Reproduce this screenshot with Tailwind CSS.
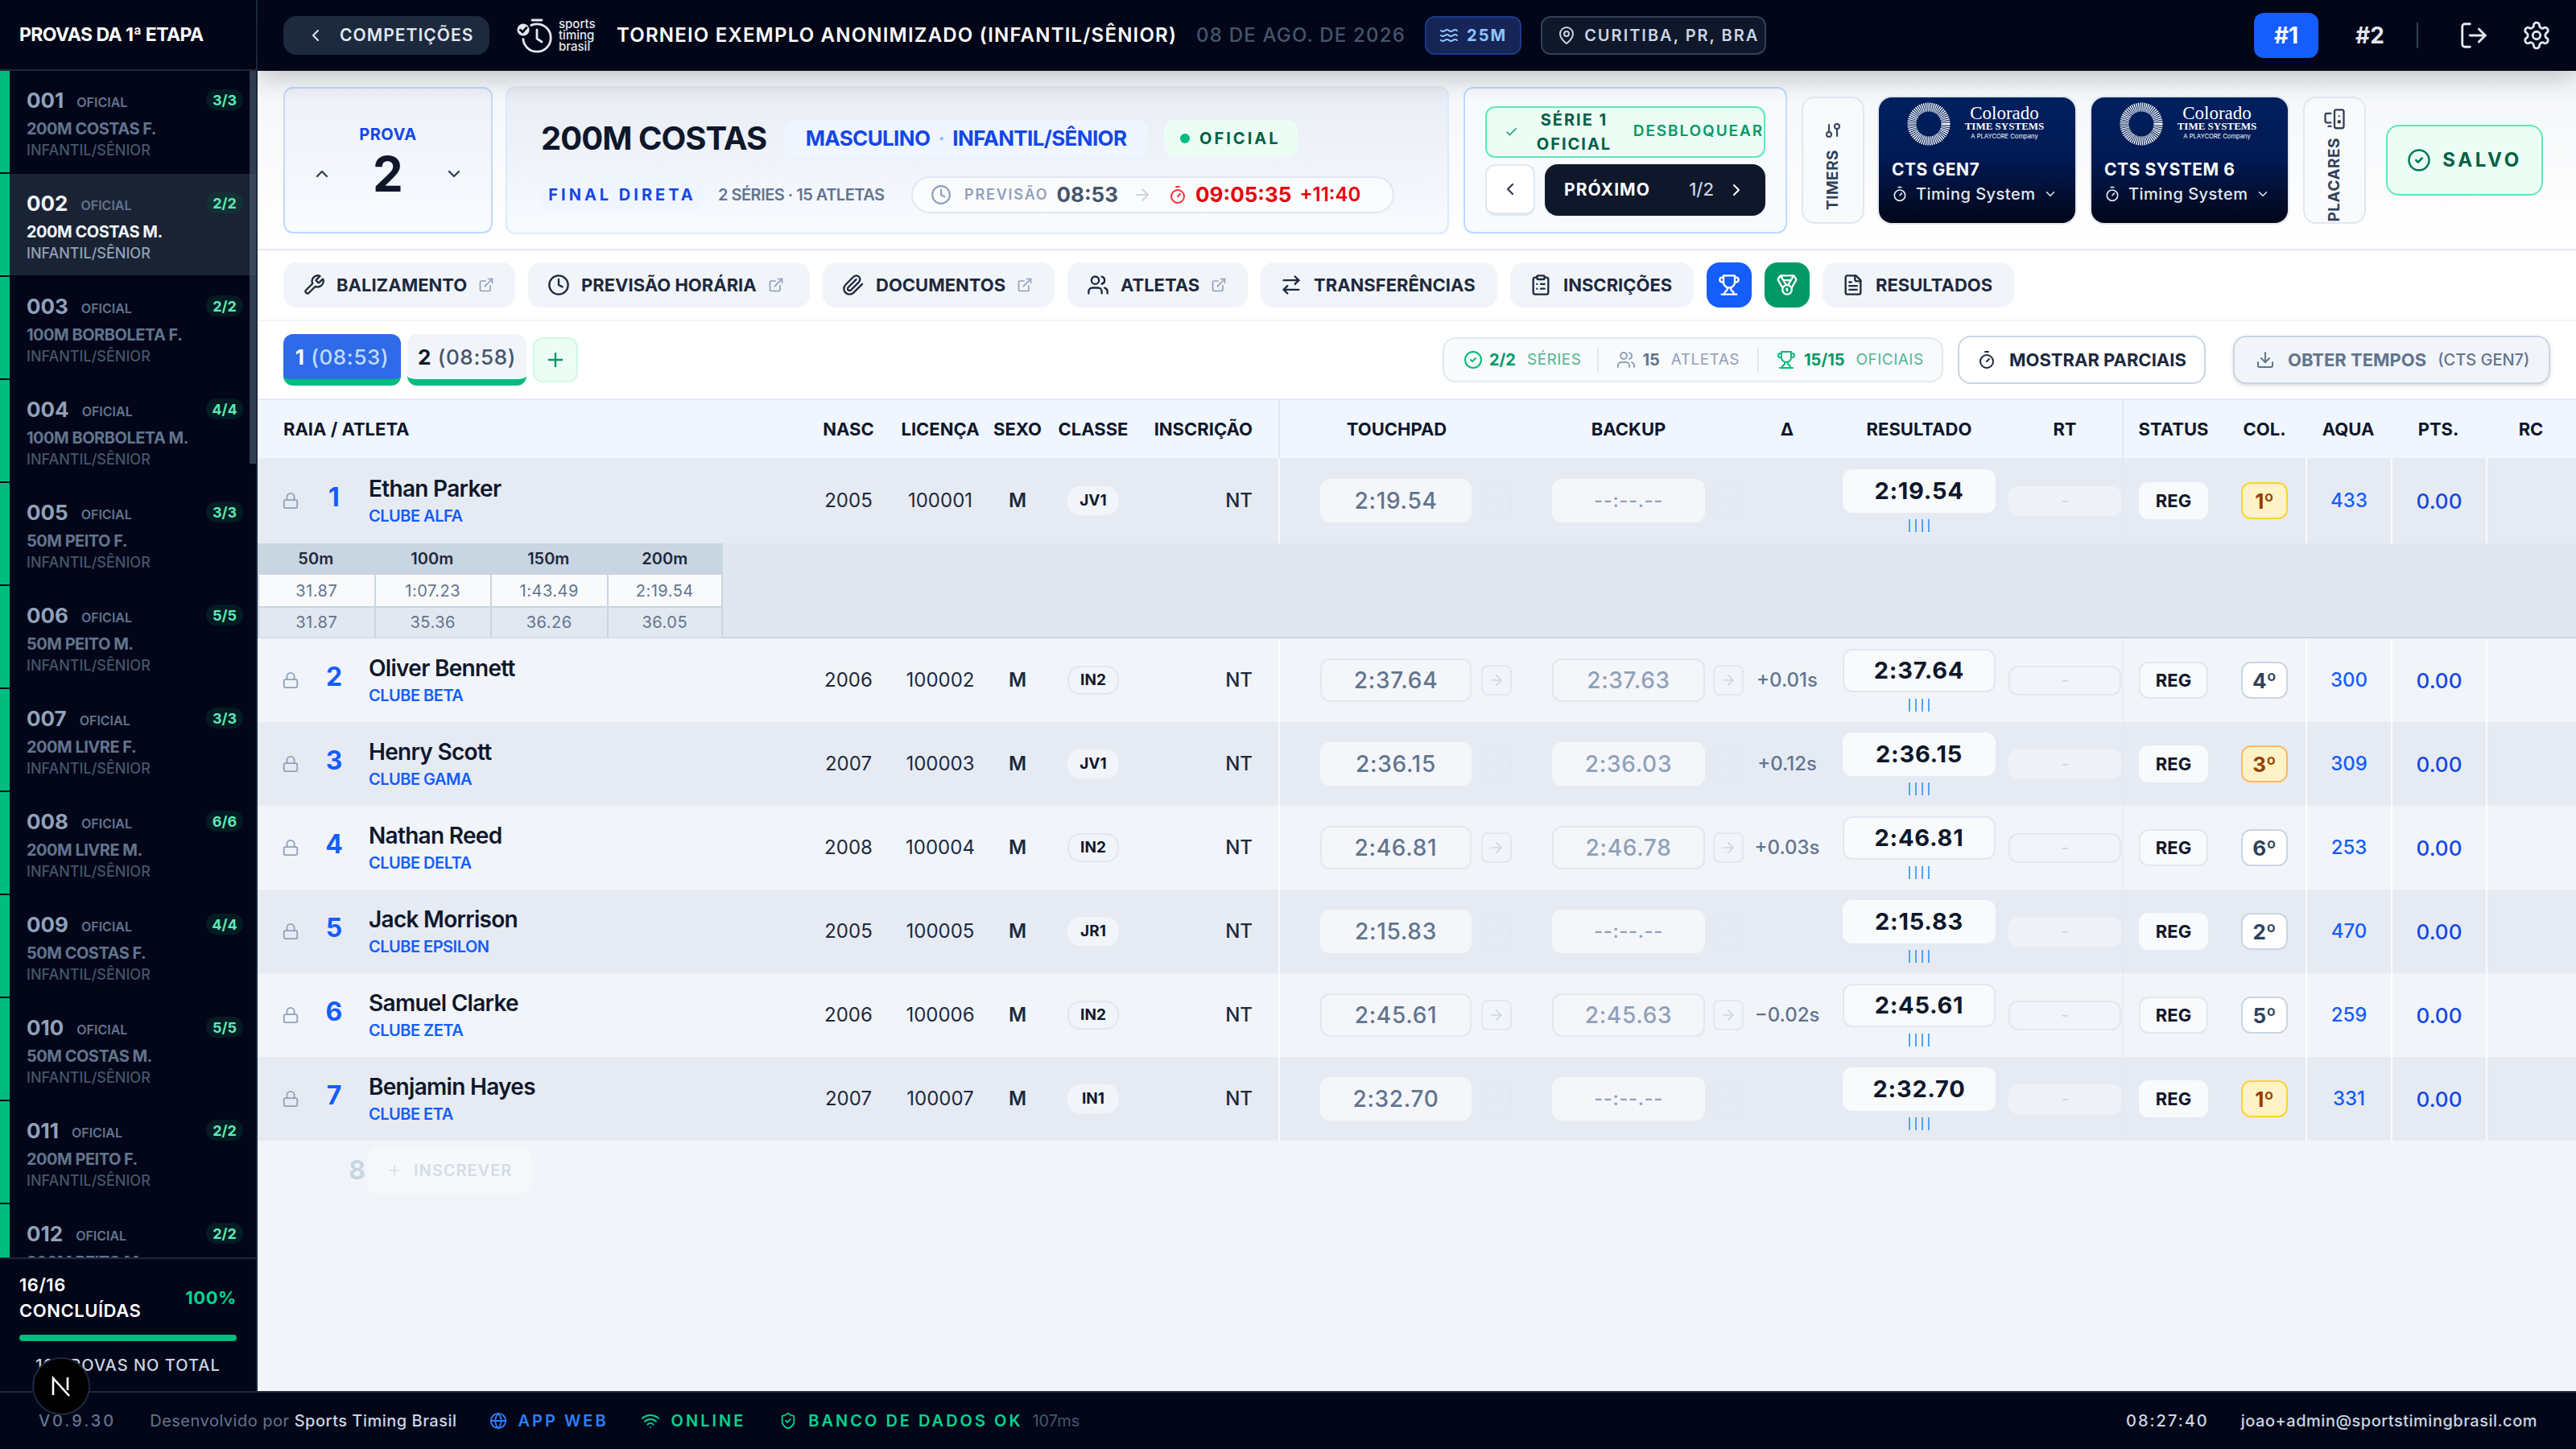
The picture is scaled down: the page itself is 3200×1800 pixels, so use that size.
<!DOCTYPE html>
<html lang="pt-BR">
<head>
    <meta charset="UTF-8">
    <title>Provas da 1ª etapa</title>
    <script src="https://cdn.jsdelivr.net/npm/@tailwindcss/browser@4"></script>
</head>
<body class="bg-slate-950 overflow-hidden">
<div class="[zoom:2] relative w-[1600px] h-[900px] flex flex-col overflow-hidden [font-family:Inter,sans-serif] text-slate-900">
    <div class="flex flex-1 min-h-0">
        <!-- sidebar -->
        <aside class="w-40 shrink-0 flex flex-col bg-slate-950 border-r border-slate-800">
            <div class="h-11 shrink-0 flex items-center pl-3 border-b border-slate-800 text-[11.5px] font-bold text-white tracking-tight whitespace-nowrap">PROVAS DA 1ª ETAPA</div>
            <div class="relative flex-1 min-h-0 overflow-hidden" id="eventList">
                <div class="absolute right-0 top-0 w-1 h-[244px] bg-slate-600/70 z-10"></div>
            </div>
            <div class="h-[83px] shrink-0 border-t border-slate-800 px-3 pt-[8px]">
                <div class="flex items-center justify-between">
                    <div class="text-[11px] leading-4 font-semibold tracking-wide text-white">16/16<br>CONCLUÍDAS</div>
                    <div class="text-[11px] font-bold tracking-wide text-emerald-400">100%</div>
                </div>
                <div class="h-1 mt-[7px] rounded-full bg-emerald-500"></div>
                <div class="mt-[9px] text-center text-[10px] leading-3 font-medium tracking-wider text-slate-300">16 PROVAS NO TOTAL</div>
            </div>
        </aside>

        <div class="flex-1 min-w-0 flex flex-col bg-slate-100">
            <!-- top bar -->
            <header class="relative z-10 h-11 shrink-0 flex items-center px-4 bg-slate-950 shadow-[0_4px_16px_rgba(0,0,0,0.22)]">
                <button class="h-6 w-[128px] flex items-center pl-[14px] gap-[9px] rounded-lg bg-slate-800 text-[10.5px] font-semibold tracking-wider text-slate-200">
                    <svg class="w-3 h-3" viewBox="0 0 24 24" fill="none" stroke="currentColor" stroke-width="2" stroke-linecap="round" stroke-linejoin="round"><path d="m15 18-6-6 6-6"/></svg>
                    COMPETIÇÕES
                </button>
                <svg class="w-[24px] h-[22px] ml-[16px] text-slate-200" viewBox="0 0 24 22" fill="none" stroke="currentColor" stroke-width="1.4" stroke-linecap="round"><circle cx="13.5" cy="12.5" r="8.6"/><path d="M10.5 1.5h6M13.5 7.5v5.5l3 2"/><circle cx="5" cy="7.5" r="4.5" fill="currentColor" stroke="#020618"/><path d="m3.2 7.6 1.4 1.4 2.4-2.8" stroke="#020618"/></svg>
                <div class="ml-[3px] w-[36px] text-[7.5px] leading-[7px] font-medium text-slate-200">sports<br>timing<br>brasil</div>
                <div class="text-[12px] font-semibold tracking-wider text-white whitespace-nowrap">TORNEIO EXEMPLO ANONIMIZADO (INFANTIL/SÊNIOR)</div>
                <div class="ml-3 text-[12px] font-medium tracking-wider text-slate-600 whitespace-nowrap">08 DE AGO. DE 2026</div>
                <div class="ml-3 h-6 w-[60px] flex items-center justify-center gap-[5px] rounded-md border border-blue-900 bg-blue-950 text-[10px] font-bold tracking-widest text-blue-300">
                    <svg class="w-3 h-3" viewBox="0 0 24 24" fill="none" stroke="currentColor" stroke-width="2" stroke-linecap="round"><path d="M2 6c.6.5 1.2 1 2.5 1C7 7 7 5 9.5 5c2.6 0 2.4 2 5 2 2.5 0 2.5-2 5-2 1.3 0 1.9.5 2.5 1"/><path d="M2 12c.6.5 1.2 1 2.5 1 2.5 0 2.5-2 5-2 2.6 0 2.4 2 5 2 2.5 0 2.5-2 5-2 1.3 0 1.9.5 2.5 1"/><path d="M2 18c.6.5 1.2 1 2.5 1 2.5 0 2.5-2 5-2 2.6 0 2.4 2 5 2 2.5 0 2.5-2 5-2 1.3 0 1.9.5 2.5 1"/></svg>
                    25M
                </div>
                <div class="ml-3 h-6 w-[140px] flex items-center pl-[9px] gap-[5px] rounded-md border border-slate-700 bg-slate-900 text-[10px] font-semibold tracking-widest text-slate-300 whitespace-nowrap">
                    <svg class="w-3 h-3 shrink-0" viewBox="0 0 24 24" fill="none" stroke="currentColor" stroke-width="2" stroke-linecap="round" stroke-linejoin="round"><path d="M20 10c0 4.993-5.539 10.193-7.399 11.799a1 1 0 0 1-1.202 0C9.539 20.193 4 14.993 4 10a8 8 0 0 1 16 0"/><circle cx="12" cy="10" r="3"/></svg>
                    CURITIBA, PR, BRA
                </div>
                <button class="ml-auto h-7 w-10 rounded-md bg-blue-600 text-sm font-bold text-white">#1</button>
                <button class="ml-3 h-7 w-10 rounded-md text-sm font-bold text-slate-200">#2</button>
                <div class="ml-[9px] w-px h-4 bg-slate-700"></div>
                <svg class="ml-[25px] w-[19px] h-[19px] text-slate-200" viewBox="0 0 24 24" fill="none" stroke="currentColor" stroke-width="1.8" stroke-linecap="round" stroke-linejoin="round"><path d="M9 21H5a2 2 0 0 1-2-2V5a2 2 0 0 1 2-2h4"/><path d="m16 17 5-5-5-5"/><path d="M21 12H9"/></svg>
                <svg class="ml-[20px] w-[19px] h-[19px] text-slate-200 -mr-[1px]" viewBox="0 0 24 24" fill="none" stroke="currentColor" stroke-width="1.8" stroke-linecap="round" stroke-linejoin="round"><path d="M12.22 2h-.44a2 2 0 0 0-2 2v.18a2 2 0 0 1-1 1.73l-.43.25a2 2 0 0 1-2 0l-.15-.08a2 2 0 0 0-2.73.73l-.22.38a2 2 0 0 0 .73 2.73l.15.1a2 2 0 0 1 1 1.72v.51a2 2 0 0 1-1 1.74l-.15.09a2 2 0 0 0-.73 2.73l.22.38a2 2 0 0 0 2.73.73l.15-.08a2 2 0 0 1 2 0l.43.25a2 2 0 0 1 1 1.73V20a2 2 0 0 0 2 2h.44a2 2 0 0 0 2-2v-.18a2 2 0 0 1 1-1.73l.43-.25a2 2 0 0 1 2 0l.15.08a2 2 0 0 0 2.73-.73l.22-.39a2 2 0 0 0-.73-2.73l-.15-.08a2 2 0 0 1-1-1.74v-.5a2 2 0 0 1 1-1.74l.15-.09a2 2 0 0 0 .73-2.73l-.22-.38a2 2 0 0 0-2.73-.73l-.15.08a2 2 0 0 1-2 0l-.43-.25a2 2 0 0 1-1-1.73V4a2 2 0 0 0-2-2z"/><circle cx="12" cy="12" r="3"/></svg>
            </header>

            <!-- event hero -->
            <section class="h-[111.5px] shrink-0 flex items-center px-4 bg-linear-to-b from-[#f4f6f9] to-white border-b border-slate-200">
                <div class="w-[130px] h-[91px] shrink-0 flex flex-col items-center pt-[21px] rounded-md border border-blue-200 bg-linear-to-b from-[#eef1f7] to-[#f8fbff]">
                    <div class="text-[10px] leading-[15px] font-bold tracking-wide text-blue-700">PROVA</div>
                    <div class="w-full flex items-center justify-between px-[17px] -mt-[1px]">
                        <svg class="w-3 h-3 text-slate-700" viewBox="0 0 24 24" fill="none" stroke="currentColor" stroke-width="2.4" stroke-linecap="round" stroke-linejoin="round"><path d="m18 15-6-6-6 6"/></svg>
                        <div class="text-[30px] leading-9 font-bold text-slate-900">2</div>
                        <svg class="w-3 h-3 text-slate-700" viewBox="0 0 24 24" fill="none" stroke="currentColor" stroke-width="2.4" stroke-linecap="round" stroke-linejoin="round"><path d="m6 9 6 6 6-6"/></svg>
                    </div>
                </div>

                <div class="ml-2 w-[586px] h-[92px] shrink-0 pl-[21px] pt-[20px] rounded-md border border-blue-100 bg-linear-to-b from-[#e8ecf4] to-[#f8fbff]">
                    <div class="flex items-center">
                        <div class="text-[20px] leading-[23px] font-bold tracking-tight text-slate-900 whitespace-nowrap">200M COSTAS</div>
                        <div class="ml-[11px] h-[23px] w-[226px] flex items-center justify-center gap-[5px] rounded-md bg-blue-50 text-[13px] font-bold tracking-tight text-blue-700 whitespace-nowrap">MASCULINO <span class="text-blue-300">·</span> INFANTIL/SÊNIOR</div>
                        <div class="ml-[10px] h-[23px] w-[83px] flex items-center pl-[10px] gap-[6px] rounded-md bg-emerald-50 text-[10px] font-bold tracking-[0.15em] text-emerald-800">
                            <span class="w-[6px] h-[6px] rounded-full bg-emerald-500"></span>OFICIAL
                        </div>
                    </div>
                    <div class="flex items-center mt-[12px]">
                        <div class="h-[19px] w-[101px] flex items-center justify-center rounded-md bg-blue-50 text-[10px] font-bold tracking-[0.2em] text-blue-700 whitespace-nowrap">FINAL DIRETA</div>
                        <div class="ml-[9px] w-[120px] text-[10px] font-semibold tracking-tight text-slate-500 whitespace-nowrap">2 SÉRIES · 15 ATLETAS</div>
                        <div class="h-[23px] w-[300px] flex items-center pl-[11px] rounded-full border border-slate-200 bg-white/60 whitespace-nowrap">
                            <svg class="w-[13px] h-[13px] text-slate-400" viewBox="0 0 24 24" fill="none" stroke="currentColor" stroke-width="2" stroke-linecap="round" stroke-linejoin="round"><circle cx="12" cy="12" r="10"/><path d="M12 6v6l4 2"/></svg>
                            <span class="ml-2 text-[9px] font-semibold tracking-widest text-slate-400">PREVISÃO</span>
                            <span class="ml-[5px] text-[13px] font-bold text-slate-600">08:53</span>
                            <svg class="ml-[9px] w-3 h-3 text-slate-300" viewBox="0 0 24 24" fill="none" stroke="currentColor" stroke-width="2" stroke-linecap="round" stroke-linejoin="round"><path d="M5 12h14"/><path d="m12 5 7 7-7 7"/></svg>
                            <svg class="ml-[10px] w-3 h-3 text-red-500" viewBox="0 0 24 24" fill="none" stroke="currentColor" stroke-width="2" stroke-linecap="round" stroke-linejoin="round"><path d="M10 2h4"/><path d="m12 14 3-3"/><circle cx="12" cy="14" r="8"/></svg>
                            <span class="ml-[5px] text-[13px] font-bold text-red-600">09:05:35</span>
                            <span class="ml-[5px] text-[12px] font-semibold text-red-600">+11:40</span>
                        </div>
                    </div>
                </div>

                <div class="ml-[9px] w-[201px] h-[91px] shrink-0 flex flex-col px-[12.5px] pt-[11px] rounded-md border border-blue-200 bg-[#f8fbfe]">
                    <div class="h-[32px] flex items-center pl-[11px] rounded-md border border-emerald-300 bg-emerald-50">
                        <svg class="w-[9px] h-[9px] text-emerald-600" viewBox="0 0 24 24" fill="none" stroke="currentColor" stroke-width="2" stroke-linecap="round" stroke-linejoin="round"><path d="M20 6 9 17l-5-5"/></svg>
                        <div class="w-[60px] ml-[6px] text-center text-[10px] leading-[15px] font-bold tracking-widest text-emerald-800">SÉRIE 1 OFICIAL</div>
                        <div class="ml-[8px] text-[9.5px] font-semibold tracking-widest text-emerald-600">DESBLOQUEAR</div>
                    </div>
                    <div class="flex gap-[6px] mt-[4px]">
                        <button class="w-[31px] h-8 flex items-center justify-center rounded-md border border-b-2 border-slate-200 bg-white text-slate-700">
                            <svg class="w-3 h-3" viewBox="0 0 24 24" fill="none" stroke="currentColor" stroke-width="2.4" stroke-linecap="round" stroke-linejoin="round"><path d="m15 18-6-6 6-6"/></svg>
                        </button>
                        <button class="flex-1 h-8 flex items-center pl-3 pr-[12px] rounded-lg bg-slate-900 text-white">
                            <span class="text-[10.5px] font-bold tracking-wider">PRÓXIMO</span>
                            <span class="ml-auto text-[11px] font-medium text-slate-300">1/2</span>
                            <svg class="ml-2 w-3 h-3" viewBox="0 0 24 24" fill="none" stroke="currentColor" stroke-width="2" stroke-linecap="round" stroke-linejoin="round"><path d="m9 18 6-6-6-6"/></svg>
                        </button>
                    </div>
                </div>

                <button class="ml-[9px] w-[39px] h-[79px] shrink-0 flex flex-col items-center pt-[14px] gap-[6px] rounded-lg border border-slate-200 bg-slate-50 text-slate-700">
                    <svg class="w-3 h-3 -rotate-90" viewBox="0 0 24 24" fill="none" stroke="currentColor" stroke-width="2" stroke-linecap="round"><path d="M14 17H5"/><path d="M19 7h-9"/><circle cx="17" cy="17" r="3"/><circle cx="7" cy="7" r="3"/></svg>
                    <span class="[writing-mode:vertical-rl] rotate-180 text-[9.5px] leading-3 font-bold tracking-wide">TIMERS</span>
                </button>

                <div class="ml-[9px] w-[122px] h-[78px] shrink-0 flex flex-col items-center pt-[2px] rounded-lg ring-1 ring-slate-200 bg-linear-to-b from-[#00205f] via-[#001a54] to-[#020618] text-white">
                    <div class="flex items-center h-[29px]">
                        <svg class="w-[27px] h-[27px]" viewBox="0 0 27 27" fill="none"><circle cx="13.5" cy="13.5" r="10.5" stroke="#fff" stroke-width="5.5" stroke-dasharray="0.6 0.5"/></svg>
                        <div class="ml-[7px] w-[53px] [font-family:'Liberation_Serif',serif] text-center">
                            <div class="text-[11.5px] leading-[9px]">Colorado</div>
                            <div class="text-[6.5px] leading-[7px] font-bold whitespace-nowrap">TIME SYSTEMS</div>
                            <div class="text-[3.8px] leading-[6px] [font-family:Inter,sans-serif] whitespace-nowrap">A PLAYCORE Company</div>
                        </div>
                    </div>
                    <div class="w-full px-2 mt-[7px] text-[10.5px] leading-[14px] font-bold tracking-wide whitespace-nowrap">CTS GEN7</div>
                    <div class="w-full flex items-center pl-2 pr-[11px] mt-[1px] text-[10px] leading-[14px] font-medium tracking-wide text-slate-200 whitespace-nowrap">
                        <svg class="w-[10px] h-[10px] shrink-0" viewBox="0 0 24 24" fill="none" stroke="currentColor" stroke-width="2" stroke-linecap="round"><path d="M10 2h4"/><path d="m12 14 3-3"/><circle cx="12" cy="14" r="8"/></svg>
                        <span class="ml-[5px]">Timing System</span>
                        <svg class="ml-auto w-[9px] h-[9px]" viewBox="0 0 24 24" fill="none" stroke="currentColor" stroke-width="2" stroke-linecap="round" stroke-linejoin="round"><path d="m6 9 6 6 6-6"/></svg>
                    </div>
                </div>
                <div class="ml-[10px] w-[122px] h-[78px] shrink-0 flex flex-col items-center pt-[2px] rounded-lg ring-1 ring-slate-200 bg-linear-to-b from-[#00205f] via-[#001a54] to-[#020618] text-white">
                    <div class="flex items-center h-[29px]">
                        <svg class="w-[27px] h-[27px]" viewBox="0 0 27 27" fill="none"><circle cx="13.5" cy="13.5" r="10.5" stroke="#fff" stroke-width="5.5" stroke-dasharray="0.6 0.5"/></svg>
                        <div class="ml-[7px] w-[53px] [font-family:'Liberation_Serif',serif] text-center">
                            <div class="text-[11.5px] leading-[9px]">Colorado</div>
                            <div class="text-[6.5px] leading-[7px] font-bold whitespace-nowrap">TIME SYSTEMS</div>
                            <div class="text-[3.8px] leading-[6px] [font-family:Inter,sans-serif] whitespace-nowrap">A PLAYCORE Company</div>
                        </div>
                    </div>
                    <div class="w-full px-2 mt-[7px] text-[10.5px] leading-[14px] font-bold tracking-wide whitespace-nowrap">CTS SYSTEM 6</div>
                    <div class="w-full flex items-center pl-2 pr-[11px] mt-[1px] text-[10px] leading-[14px] font-medium tracking-wide text-slate-200 whitespace-nowrap">
                        <svg class="w-[10px] h-[10px] shrink-0" viewBox="0 0 24 24" fill="none" stroke="currentColor" stroke-width="2" stroke-linecap="round"><path d="M10 2h4"/><path d="m12 14 3-3"/><circle cx="12" cy="14" r="8"/></svg>
                        <span class="ml-[5px]">Timing System</span>
                        <svg class="ml-auto w-[9px] h-[9px]" viewBox="0 0 24 24" fill="none" stroke="currentColor" stroke-width="2" stroke-linecap="round" stroke-linejoin="round"><path d="m6 9 6 6 6-6"/></svg>
                    </div>
                </div>

                <button class="ml-[9.5px] w-[39px] h-[79px] shrink-0 flex flex-col items-center pt-[6px] gap-[5px] rounded-lg border border-slate-200 bg-slate-50 text-slate-700">
                    <svg class="w-[14px] h-[14px]" viewBox="0 0 24 24" fill="none" stroke="currentColor" stroke-width="2" stroke-linecap="round" stroke-linejoin="round"><path d="M5.5 20H8"/><path d="M17 9h.01"/><rect width="10" height="20" x="12" y="2" rx="2"/><path d="M8 6H4a2 2 0 0 0-2 2v6a2 2 0 0 0 2 2h4"/><circle cx="17" cy="15" r="1"/></svg>
                    <span class="[writing-mode:vertical-rl] rotate-180 text-[9.5px] leading-3 font-bold tracking-wide">PLACARES</span>
                </button>

                <div class="ml-[12.5px] w-[97.5px] h-11 shrink-0 flex items-center justify-center gap-[7px] rounded-lg border border-emerald-300 bg-emerald-50 text-[12px] font-bold tracking-[0.15em] text-emerald-800">
                    <svg class="w-[15px] h-[15px] text-emerald-700" viewBox="0 0 24 24" fill="none" stroke="currentColor" stroke-width="2" stroke-linecap="round" stroke-linejoin="round"><circle cx="12" cy="12" r="10"/><path d="m9 12 2 2 4-4"/></svg>
                    SALVO
                </div>
            </section>

            <!-- toolbar -->
            <nav class="h-11 shrink-0 flex items-center gap-2 px-4 bg-white border-b border-slate-100 text-[11px] font-bold text-slate-800 whitespace-nowrap">
                <a class="h-7 w-[144px] flex items-center gap-[7px] pl-3 rounded-lg bg-slate-100">
                    <svg class="w-[14px] h-[14px]" viewBox="0 0 24 24" fill="none" stroke="currentColor" stroke-width="2" stroke-linecap="round" stroke-linejoin="round"><path d="M14.7 6.3a1 1 0 0 0 0 1.4l1.6 1.6a1 1 0 0 0 1.4 0l3.77-3.77a6 6 0 0 1-7.94 7.94l-6.91 6.91a2.12 2.12 0 0 1-3-3l6.91-6.91a6 6 0 0 1 7.94-7.94l-3.76 3.76z"/></svg>
                    BALIZAMENTO
                    <svg class="w-[10px] h-[10px] text-slate-400" viewBox="0 0 24 24" fill="none" stroke="currentColor" stroke-width="2" stroke-linecap="round" stroke-linejoin="round"><path d="M15 3h6v6"/><path d="M10 14 21 3"/><path d="M18 13v6a2 2 0 0 1-2 2H5a2 2 0 0 1-2-2V8a2 2 0 0 1 2-2h6"/></svg>
                </a>
                <a class="h-7 w-[175px] flex items-center gap-[7px] pl-3 rounded-lg bg-slate-100">
                    <svg class="w-[14px] h-[14px]" viewBox="0 0 24 24" fill="none" stroke="currentColor" stroke-width="2" stroke-linecap="round" stroke-linejoin="round"><circle cx="12" cy="12" r="10"/><path d="M12 6v6l4 2"/></svg>
                    PREVISÃO HORÁRIA
                    <svg class="w-[10px] h-[10px] text-slate-400" viewBox="0 0 24 24" fill="none" stroke="currentColor" stroke-width="2" stroke-linecap="round" stroke-linejoin="round"><path d="M15 3h6v6"/><path d="M10 14 21 3"/><path d="M18 13v6a2 2 0 0 1-2 2H5a2 2 0 0 1-2-2V8a2 2 0 0 1 2-2h6"/></svg>
                </a>
                <a class="h-7 w-[144px] flex items-center gap-[7px] pl-3 rounded-lg bg-slate-100">
                    <svg class="w-[14px] h-[14px]" viewBox="0 0 24 24" fill="none" stroke="currentColor" stroke-width="2" stroke-linecap="round" stroke-linejoin="round"><path d="m21.44 11.05-9.19 9.19a6 6 0 0 1-8.49-8.49l8.57-8.57A4 4 0 1 1 18 8.84l-8.59 8.57a2 2 0 0 1-2.83-2.83l8.49-8.48"/></svg>
                    DOCUMENTOS
                    <svg class="w-[10px] h-[10px] text-slate-400" viewBox="0 0 24 24" fill="none" stroke="currentColor" stroke-width="2" stroke-linecap="round" stroke-linejoin="round"><path d="M15 3h6v6"/><path d="M10 14 21 3"/><path d="M18 13v6a2 2 0 0 1-2 2H5a2 2 0 0 1-2-2V8a2 2 0 0 1 2-2h6"/></svg>
                </a>
                <a class="h-7 w-[112px] flex items-center gap-[7px] pl-3 rounded-lg bg-slate-100">
                    <svg class="w-[14px] h-[14px]" viewBox="0 0 24 24" fill="none" stroke="currentColor" stroke-width="2" stroke-linecap="round" stroke-linejoin="round"><path d="M16 21v-2a4 4 0 0 0-4-4H6a4 4 0 0 0-4 4v2"/><circle cx="9" cy="7" r="4"/><path d="M22 21v-2a4 4 0 0 0-3-3.87"/><path d="M16 3.13a4 4 0 0 1 0 7.75"/></svg>
                    ATLETAS
                    <svg class="w-[10px] h-[10px] text-slate-400" viewBox="0 0 24 24" fill="none" stroke="currentColor" stroke-width="2" stroke-linecap="round" stroke-linejoin="round"><path d="M15 3h6v6"/><path d="M10 14 21 3"/><path d="M18 13v6a2 2 0 0 1-2 2H5a2 2 0 0 1-2-2V8a2 2 0 0 1 2-2h6"/></svg>
                </a>
                <a class="h-7 w-[147px] flex items-center gap-[7px] pl-3 rounded-lg bg-slate-100">
                    <svg class="w-[14px] h-[14px]" viewBox="0 0 24 24" fill="none" stroke="currentColor" stroke-width="2" stroke-linecap="round" stroke-linejoin="round"><path d="m16 3 4 4-4 4"/><path d="M20 7H4"/><path d="m8 21-4-4 4-4"/><path d="M4 17h16"/></svg>
                    TRANSFERÊNCIAS
                </a>
                <a class="h-7 w-[114px] flex items-center gap-[7px] pl-3 rounded-lg bg-slate-100">
                    <svg class="w-[14px] h-[14px]" viewBox="0 0 24 24" fill="none" stroke="currentColor" stroke-width="2" stroke-linecap="round" stroke-linejoin="round"><rect width="8" height="4" x="8" y="2" rx="1"/><path d="M16 4h2a2 2 0 0 1 2 2v14a2 2 0 0 1-2 2H6a2 2 0 0 1-2-2V6a2 2 0 0 1 2-2h2"/><path d="M12 11h4"/><path d="M12 16h4"/><path d="M8 11h.01"/><path d="M8 16h.01"/></svg>
                    INSCRIÇÕES
                </a>
                <a class="h-7 w-7 flex items-center justify-center rounded-lg bg-blue-600 text-white">
                    <svg class="w-[14px] h-[14px]" viewBox="0 0 24 24" fill="none" stroke="currentColor" stroke-width="2" stroke-linecap="round" stroke-linejoin="round"><path d="M6 9H4.5a2.5 2.5 0 0 1 0-5H6"/><path d="M18 9h1.5a2.5 2.5 0 0 0 0-5H18"/><path d="M4 22h16"/><path d="M10 14.66V17c0 .55-.47.98-.97 1.21C7.85 18.75 7 20.24 7 22"/><path d="M14 14.66V17c0 .55.47.98.97 1.21C16.15 18.75 17 20.24 17 22"/><path d="M18 2H6v7a6 6 0 0 0 12 0V2Z"/></svg>
                </a>
                <a class="h-7 w-7 flex items-center justify-center rounded-lg bg-emerald-600 text-white">
                    <svg class="w-[14px] h-[14px]" viewBox="0 0 24 24" fill="none" stroke="currentColor" stroke-width="2" stroke-linecap="round" stroke-linejoin="round"><path d="M7.21 15 2.66 7.14a2 2 0 0 1 .13-2.2L4.4 2.8A2 2 0 0 1 6 2h12a2 2 0 0 1 1.6.8l1.6 2.14a2 2 0 0 1 .14 2.2L16.79 15"/><path d="M11 12 5.12 2.2"/><path d="m13 12 5.88-9.8"/><path d="M8 7h8"/><circle cx="12" cy="17" r="5"/><path d="M12 18v-2h-.5"/></svg>
                </a>
                <a class="h-7 w-[119px] flex items-center gap-[7px] pl-3 rounded-lg bg-slate-100">
                    <svg class="w-[14px] h-[14px]" viewBox="0 0 24 24" fill="none" stroke="currentColor" stroke-width="2" stroke-linecap="round" stroke-linejoin="round"><path d="M15 2H6a2 2 0 0 0-2 2v16a2 2 0 0 0 2 2h12a2 2 0 0 0 2-2V7Z"/><path d="M14 2v4a2 2 0 0 0 2 2h4"/><path d="M10 9H8"/><path d="M16 13H8"/><path d="M16 17H8"/></svg>
                    RESULTADOS
                </a>
            </nav>

            <!-- heats row -->
            <div class="h-12 shrink-0 flex items-center px-4 bg-white whitespace-nowrap">
                <button class="w-[73px] h-8 rounded-md border-b-4 border-emerald-500 bg-[#2f6ae8] text-[13px] font-medium tracking-wide text-blue-200"><b class="font-bold text-white">1</b> (08:53)</button>
                <button class="ml-1 w-[74px] h-8 rounded-md border-b-4 border-emerald-500 bg-slate-100 text-[13px] font-medium tracking-wide text-slate-600"><b class="font-bold text-slate-900">2</b> (08:58)</button>
                <button class="ml-1 w-7 h-7 flex items-center justify-center rounded-md border border-emerald-100 bg-emerald-50 text-emerald-600">
                    <svg class="w-[14px] h-[14px]" viewBox="0 0 24 24" fill="none" stroke="currentColor" stroke-width="2" stroke-linecap="round"><path d="M5 12h14"/><path d="M12 5v14"/></svg>
                </button>
                <div class="ml-auto w-[311px] h-7 flex items-center pl-[12px] rounded-lg border border-slate-200 bg-slate-50 text-[10px]">
                    <svg class="w-3 h-3 text-emerald-500" viewBox="0 0 24 24" fill="none" stroke="currentColor" stroke-width="2" stroke-linecap="round" stroke-linejoin="round"><circle cx="12" cy="12" r="10"/><path d="m9 12 2 2 4-4"/></svg>
                    <span class="ml-1 font-bold text-emerald-600">2/2</span>
                    <span class="ml-[7px] text-[9.5px] tracking-wide text-emerald-600/70">SÉRIES</span>
                    <span class="ml-[10px] w-px h-4 bg-slate-200"></span>
                    <svg class="ml-[11px] w-3 h-3 text-slate-400" viewBox="0 0 24 24" fill="none" stroke="currentColor" stroke-width="2" stroke-linecap="round" stroke-linejoin="round"><path d="M16 21v-2a4 4 0 0 0-4-4H6a4 4 0 0 0-4 4v2"/><circle cx="9" cy="7" r="4"/><path d="M22 21v-2a4 4 0 0 0-3-3.87"/><path d="M16 3.13a4 4 0 0 1 0 7.75"/></svg>
                    <span class="ml-1 font-bold text-slate-500">15</span>
                    <span class="ml-[7px] text-[9.5px] tracking-wide text-slate-400">ATLETAS</span>
                    <span class="ml-[11px] w-px h-4 bg-slate-200"></span>
                    <svg class="ml-[11px] w-3 h-3 text-emerald-500" viewBox="0 0 24 24" fill="none" stroke="currentColor" stroke-width="2" stroke-linecap="round" stroke-linejoin="round"><path d="M6 9H4.5a2.5 2.5 0 0 1 0-5H6"/><path d="M18 9h1.5a2.5 2.5 0 0 0 0-5H18"/><path d="M4 22h16"/><path d="M10 14.66V17c0 .55-.47.98-.97 1.21C7.85 18.75 7 20.24 7 22"/><path d="M14 14.66V17c0 .55.47.98.97 1.21C16.15 18.75 17 20.24 17 22"/><path d="M18 2H6v7a6 6 0 0 0 12 0V2Z"/></svg>
                    <span class="ml-[5px] font-bold text-emerald-600">15/15</span>
                    <span class="ml-[7px] text-[9.5px] tracking-wide text-emerald-600/70">OFICIAIS</span>
                </div>
                <button class="ml-[9px] w-[154px] h-[30px] flex items-center pl-[11px] gap-[8px] rounded-lg border border-slate-300 bg-white text-[11px] font-bold text-slate-800">
                    <svg class="w-3 h-3" viewBox="0 0 24 24" fill="none" stroke="currentColor" stroke-width="2" stroke-linecap="round"><path d="M10 2h4"/><path d="m12 14 3-3"/><circle cx="12" cy="14" r="8"/></svg>
                    MOSTRAR PARCIAIS
                </button>
                <button class="ml-[17px] w-[197px] h-[30px] flex items-center pl-[13px] rounded-lg border border-slate-300 bg-slate-100 shadow-sm text-[11px] font-bold text-slate-500">
                    <svg class="w-3 h-3" viewBox="0 0 24 24" fill="none" stroke="currentColor" stroke-width="2" stroke-linecap="round" stroke-linejoin="round"><path d="M21 15v4a2 2 0 0 1-2 2H5a2 2 0 0 1-2-2v-4"/><path d="m7 10 5 5 5-5"/><path d="M12 15V3"/></svg>
                    <span class="ml-[8px]">OBTER TEMPOS</span>
                    <span class="ml-[7px] text-[10px] font-medium">(CTS GEN7)</span>
                </button>
            </div>

            <!-- table -->
            <div class="flex-1 min-h-0">
                <div class="h-[37px] grid grid-cols-[343px_48px_66px_30px_64px_84px_145px_143px_54px_110px_72px_62px_51px_53px_59px_56px] items-stretch border-t border-slate-200 bg-blue-50 text-[11px] font-bold text-slate-900 whitespace-nowrap">
                    <div class="flex items-center pl-4">RAIA / ATLETA</div>
                    <div class="flex items-center justify-center">NASC</div>
                    <div class="flex items-center justify-center">LICENÇA</div>
                    <div class="flex items-center justify-center">SEXO</div>
                    <div class="flex items-center justify-center">CLASSE</div>
                    <div class="flex items-center justify-end pr-4 border-r border-slate-200">INSCRIÇÃO</div>
                    <div class="flex items-center justify-center">TOUCHPAD</div>
                    <div class="flex items-center justify-center">BACKUP</div>
                    <div class="flex items-center justify-center">Δ</div>
                    <div class="flex items-center justify-center">RESULTADO</div>
                    <div class="flex items-center justify-center border-r border-slate-200">RT</div>
                    <div class="flex items-center justify-center">STATUS</div>
                    <div class="flex items-center justify-center">COL.</div>
                    <div class="flex items-center justify-center">AQUA</div>
                    <div class="flex items-center justify-center">PTS.</div>
                    <div class="flex items-center justify-center">RC</div>
                </div>
                <div id="rows"></div>
                <div class="h-[37px] flex items-center">
                    <div class="w-[68px] pr-[1px] text-right text-[16px] font-bold text-slate-300">8</div>
                    <div class="ml-[0px] w-[102px] h-7 flex items-center pl-[12px] gap-[7px] rounded-md bg-white/40 text-[10px] font-semibold tracking-wider text-slate-300/80">
                        <svg class="w-[10px] h-[10px]" viewBox="0 0 24 24" fill="none" stroke="currentColor" stroke-width="2" stroke-linecap="round"><path d="M5 12h14"/><path d="M12 5v14"/></svg>
                        INSCREVER
                    </div>
                </div>
            </div>
        </div>
    </div>

    <!-- footer -->
    <footer class="h-9 shrink-0 flex items-center pl-6 pr-6 border-t border-slate-800 bg-slate-950 text-[10px] whitespace-nowrap">
        <span class="font-medium tracking-[0.15em] text-slate-500">V0.9.30</span>
        <span class="ml-[21px] tracking-wide text-slate-500">Desenvolvido por <span class="font-medium text-slate-300">Sports Timing Brasil</span></span>
        <svg class="ml-[20px] w-[11px] h-[11px] text-blue-500" viewBox="0 0 24 24" fill="none" stroke="currentColor" stroke-width="2" stroke-linecap="round" stroke-linejoin="round"><circle cx="12" cy="12" r="10"/><path d="M12 2a14.5 14.5 0 0 0 0 20 14.5 14.5 0 0 0 0-20"/><path d="M2 12h20"/></svg>
        <span class="ml-[7px] font-semibold tracking-[0.15em] text-blue-500">APP WEB</span>
        <svg class="ml-[20px] w-[12px] h-[12px] text-emerald-400" viewBox="0 0 24 24" fill="none" stroke="currentColor" stroke-width="2" stroke-linecap="round" stroke-linejoin="round"><path d="M12 20h.01"/><path d="M2 8.82a15 15 0 0 1 20 0"/><path d="M5 12.859a10 10 0 0 1 14 0"/><path d="M8.5 16.429a5 5 0 0 1 7 0"/></svg>
        <span class="ml-[7px] font-semibold tracking-[0.15em] text-emerald-400">ONLINE</span>
        <svg class="ml-[21px] w-[11px] h-[11px] text-emerald-400" viewBox="0 0 24 24" fill="none" stroke="currentColor" stroke-width="2" stroke-linecap="round" stroke-linejoin="round"><path d="M20 13c0 5-3.5 7.5-7.66 8.95a1 1 0 0 1-.67-.01C7.5 20.5 4 18 4 13V6a1 1 0 0 1 1-1c2 0 4.5-1.2 6.24-2.72a1.17 1.17 0 0 1 1.52 0C14.51 3.81 17 5 19 5a1 1 0 0 1 1 1z"/><path d="m9 12 2 2 4-4"/></svg>
        <span class="ml-[7px] font-semibold tracking-[0.15em] text-emerald-400">BANCO DE DADOS OK</span>
        <span class="ml-[6px] text-slate-600">107ms</span>
        <span class="ml-auto font-medium tracking-widest text-slate-300">08:27:40</span>
        <span class="ml-5 font-medium tracking-wide text-slate-300">joao+admin@sportstimingbrasil.com</span>
    </footer>

    <!-- next.js dev badge -->
    <div class="absolute left-5 top-[843px] w-9 h-9 flex items-center justify-center rounded-full bg-black border border-slate-800 z-20">
        <svg class="w-[15px] h-[15px]" viewBox="0 0 15 15" fill="none" stroke="#fff" stroke-width="1.3"><path d="M2.5 13V2.5L12.5 13.5"/><path d="M11.5 2v8"/></svg>
    </div>
</div>

<script>
    // Sidebar events
    const events = [
        ['001', '200M COSTAS F.', '3/3'], ['002', '200M COSTAS M.', '2/2'], ['003', '100M BORBOLETA F.', '2/2'],
        ['004', '100M BORBOLETA M.', '4/4'], ['005', '50M PEITO F.', '3/3'], ['006', '50M PEITO M.', '5/5'],
        ['007', '200M LIVRE F.', '3/3'], ['008', '200M LIVRE M.', '6/6'], ['009', '50M COSTAS F.', '4/4'],
        ['010', '50M COSTAS M.', '5/5'], ['011', '200M PEITO F.', '2/2'], ['012', '200M PEITO M.', '2/2'],
    ];
    const eventList = document.getElementById('eventList');
    events.forEach(([num, title, count]) => {
        const active = num === '002';
        const item = document.createElement('div');
        item.className = 'h-[63px] mb-px pl-[10.5px] pr-2 pt-[11px] border-l-[6px] border-emerald-500 whitespace-nowrap ' + (active ? 'bg-[#1a2333]' : 'bg-slate-950');
        item.innerHTML = `
            <div class="flex items-center h-[14px]">
                <span class="text-[13px] font-bold ${active ? 'text-slate-100' : 'text-slate-400'}">${num}</span>
                <span class="ml-2 mt-[3px] text-[8px] font-semibold text-slate-500">OFICIAL</span>
                <span class="ml-auto w-[23px] h-[13px] flex items-center justify-center rounded-full bg-emerald-900/30 text-[9px] font-bold text-emerald-300">${count}</span>
            </div>
            <div class="mt-[5px] text-[10px] leading-3 font-bold tracking-tight ${active ? 'text-slate-100' : 'text-slate-500'}">${title}</div>
            <div class="mt-[1.5px] text-[9px] leading-3 font-medium ${active ? 'text-slate-400' : 'text-slate-600'}">INFANTIL/SÊNIOR</div>`;
        eventList.appendChild(item);
    });

    // Table rows
    const athletes = [
        { lane: 1, name: 'Ethan Parker', club: 'CLUBE ALFA', year: 2005, lic: '100001', cls: 'JV1', touch: '2:19.54', backup: '--:--.--', delta: '', res: '2:19.54', pos: '1º', medal: 'gold', aqua: 433 },
        { lane: 2, name: 'Oliver Bennett', club: 'CLUBE BETA', year: 2006, lic: '100002', cls: 'IN2', touch: '2:37.64', backup: '2:37.63', delta: '+0.01s', res: '2:37.64', pos: '4º', aqua: 300 },
        { lane: 3, name: 'Henry Scott', club: 'CLUBE GAMA', year: 2007, lic: '100003', cls: 'JV1', touch: '2:36.15', backup: '2:36.03', delta: '+0.12s', res: '2:36.15', pos: '3º', medal: 'bronze', aqua: 309 },
        { lane: 4, name: 'Nathan Reed', club: 'CLUBE DELTA', year: 2008, lic: '100004', cls: 'IN2', touch: '2:46.81', backup: '2:46.78', delta: '+0.03s', res: '2:46.81', pos: '6º', aqua: 253 },
        { lane: 5, name: 'Jack Morrison', club: 'CLUBE EPSILON', year: 2005, lic: '100005', cls: 'JR1', touch: '2:15.83', backup: '--:--.--', delta: '', res: '2:15.83', pos: '2º', aqua: 470 },
        { lane: 6, name: 'Samuel Clarke', club: 'CLUBE ZETA', year: 2006, lic: '100006', cls: 'IN2', touch: '2:45.61', backup: '2:45.63', delta: '−0.02s', res: '2:45.61', pos: '5º', aqua: 259 },
        { lane: 7, name: 'Benjamin Hayes', club: 'CLUBE ETA', year: 2007, lic: '100007', cls: 'IN1', touch: '2:32.70', backup: '--:--.--', delta: '', res: '2:32.70', pos: '1º', medal: 'gold', aqua: 331 },
    ];
    const arrow = '<svg class="w-[10px] h-[10px]" viewBox="0 0 24 24" fill="none" stroke="currentColor" stroke-width="2" stroke-linecap="round" stroke-linejoin="round"><path d="M5 12h14"/><path d="m12 5 7 7-7 7"/></svg>';
    const lock = '<svg class="w-[11px] h-[11px] text-slate-400" viewBox="0 0 24 24" fill="none" stroke="currentColor" stroke-width="2" stroke-linecap="round" stroke-linejoin="round"><rect width="18" height="11" x="3" y="11" rx="2"/><path d="M7 11V7a5 5 0 0 1 10 0v4"/></svg>';

    const rowsEl = document.getElementById('rows');
    athletes.forEach((a, i) => {
        const odd = i % 2 === 0;
        const border = odd ? 'border-transparent' : 'border-slate-200';
        const noBackup = a.backup.startsWith('-');
        const medalClass = a.medal === 'gold' ? 'border-amber-300 bg-amber-100 text-amber-800'
            : a.medal === 'bronze' ? 'border-orange-300 bg-amber-100 text-amber-800'
            : 'border-slate-300 bg-white text-slate-700';
        const row = document.createElement('div');
        row.className = 'grid grid-cols-[343px_48px_66px_30px_64px_84px_145px_143px_54px_110px_72px_62px_51px_53px_59px_56px] items-stretch whitespace-nowrap ' +
            (i === 0 ? 'h-[53px] ' : 'h-[52px] ') + (odd ? 'bg-[#e6ebf3]' : 'bg-[#f1f5f9]');
        row.innerHTML = `
            <div class="flex items-center pl-[15px]">
                ${lock}
                <div class="w-[43px] -mt-1 text-center text-[16px] font-bold text-blue-600">${a.lane}</div>
                <div class="leading-none">
                    <div class="text-[14px] leading-[18px] font-semibold tracking-tight text-slate-900">${a.name}</div>
                    <div class="text-[10px] leading-[14px] mt-[1px] font-semibold tracking-tight text-blue-600">${a.club}</div>
                </div>
            </div>
            <div class="flex items-center justify-center text-[12px] text-slate-800">${a.year}</div>
            <div class="flex items-center justify-center text-[12px] text-slate-800">${a.lic}</div>
            <div class="flex items-center justify-center text-[12px] font-semibold text-slate-800">M</div>
            <div class="flex items-center justify-center"><span class="w-[32px] h-[18px] flex items-center justify-center rounded-lg border ${odd ? 'border-transparent bg-slate-100' : 'border-slate-200 bg-slate-100'} text-[9.5px] font-bold text-slate-900">${a.cls}</span></div>
            <div class="flex items-center justify-end pr-4 border-r border-white/70 text-[12px] font-medium text-slate-800">NT</div>
            <div class="flex items-center pl-[25px] gap-[6px]">
                <span class="w-[94px] h-[27px] flex items-center justify-center rounded-md border ${border} bg-[#f4f6fa] text-[14px] font-medium tracking-wide text-slate-500">${a.touch}</span>
                <span class="w-[19px] h-[19px] flex items-center justify-center rounded border ${odd ? 'border-slate-200/60 text-slate-200' : 'border-slate-200 text-slate-300'}">${arrow}</span>
            </div>
            <div class="flex items-center pl-[24px] gap-[5px]">
                <span class="w-[95px] h-[27px] flex items-center justify-center rounded-md border ${border} bg-[#f4f6fa] ${noBackup ? 'text-[12px] text-slate-400' : 'text-[14px] text-slate-400'} font-medium tracking-wide">${a.backup}</span>
                <span class="w-[19px] h-[19px] flex items-center justify-center rounded border ${noBackup || odd ? 'border-slate-200/60 text-slate-200' : 'border-slate-200 text-slate-300'}">${arrow}</span>
            </div>
            <div class="flex items-center justify-center text-[12px] font-medium text-slate-500">${a.delta}</div>
            <div class="flex flex-col items-center justify-center gap-[4px]">
                <span class="w-[95px] h-[27px] flex items-center justify-center rounded-md border ${border} bg-slate-50 text-[14.5px] font-bold tracking-wide text-slate-900">${a.res}</span>
                <span class="flex gap-[3px] h-2"><i class="w-px bg-blue-400"></i><i class="w-px bg-blue-400"></i><i class="w-px bg-blue-400"></i><i class="w-px bg-blue-400"></i></span>
            </div>
            <div class="flex items-center justify-center border-r border-slate-200/60">
                <span class="w-[70px] h-[18.5px] flex items-center justify-center rounded-md border ${border} bg-slate-100/70 text-[10px] text-slate-300">-</span>
            </div>
            <div class="flex items-center justify-center"><span class="w-[43px] h-[23px] flex items-center justify-center rounded-md border ${border} bg-slate-50 text-[11px] font-bold text-slate-900">REG</span></div>
            <div class="flex items-center justify-center"><span class="w-[29px] h-[23px] flex items-center justify-center rounded-md border ${medalClass} text-[13px] font-bold">${a.pos}</span></div>
            <div class="flex items-center justify-center border-l border-white/80 text-[12px] font-medium text-blue-600">${a.aqua}</div>
            <div class="flex items-center justify-center border-l border-white/80 text-[13px] font-medium text-blue-700">0.00</div>
            <div class="border-l border-white/80"></div>`;
        rowsEl.appendChild(row);

        // Split times of the first lane
        if (i === 0) {
            const splits = document.createElement('div');
            splits.className = 'h-[59px] border-b border-slate-300 bg-[#e1e7f0]';
            splits.innerHTML = `
                <div class="w-[289px] grid grid-cols-4 text-center text-[10px] whitespace-nowrap">
                    <div class="h-[19.5px] leading-[19px] bg-slate-300 font-semibold text-slate-800">50m</div>
                    <div class="h-[19.5px] leading-[19px] bg-slate-300 font-semibold text-slate-800">100m</div>
                    <div class="h-[19.5px] leading-[19px] bg-slate-300 font-semibold text-slate-800">150m</div>
                    <div class="h-[19.5px] leading-[19px] bg-slate-300 font-semibold text-slate-800">200m</div>
                    <div class="h-[20.5px] leading-[20px] border-l border-b border-slate-300 bg-slate-50 tracking-wide text-slate-500">31.87</div>
                    <div class="h-[20.5px] leading-[20px] border-l border-b border-slate-300 bg-slate-50 tracking-wide text-slate-500">1:07.23</div>
                    <div class="h-[20.5px] leading-[20px] border-l border-b border-slate-300 bg-slate-50 tracking-wide text-slate-500">1:43.49</div>
                    <div class="h-[20.5px] leading-[20px] border-x border-b border-slate-300 bg-slate-50 tracking-wide text-slate-500">2:19.54</div>
                    <div class="h-[18.5px] leading-[18px] border-l border-slate-300 bg-slate-200 tracking-wide text-slate-500">31.87</div>
                    <div class="h-[18.5px] leading-[18px] border-l border-slate-300 bg-slate-200 tracking-wide text-slate-500">35.36</div>
                    <div class="h-[18.5px] leading-[18px] border-l border-slate-300 bg-slate-200 tracking-wide text-slate-500">36.26</div>
                    <div class="h-[18.5px] leading-[18px] border-x border-slate-300 bg-slate-200 tracking-wide text-slate-500">36.05</div>
                </div>`;
            rowsEl.appendChild(splits);
        }
    });
</script>
</body>
</html>
